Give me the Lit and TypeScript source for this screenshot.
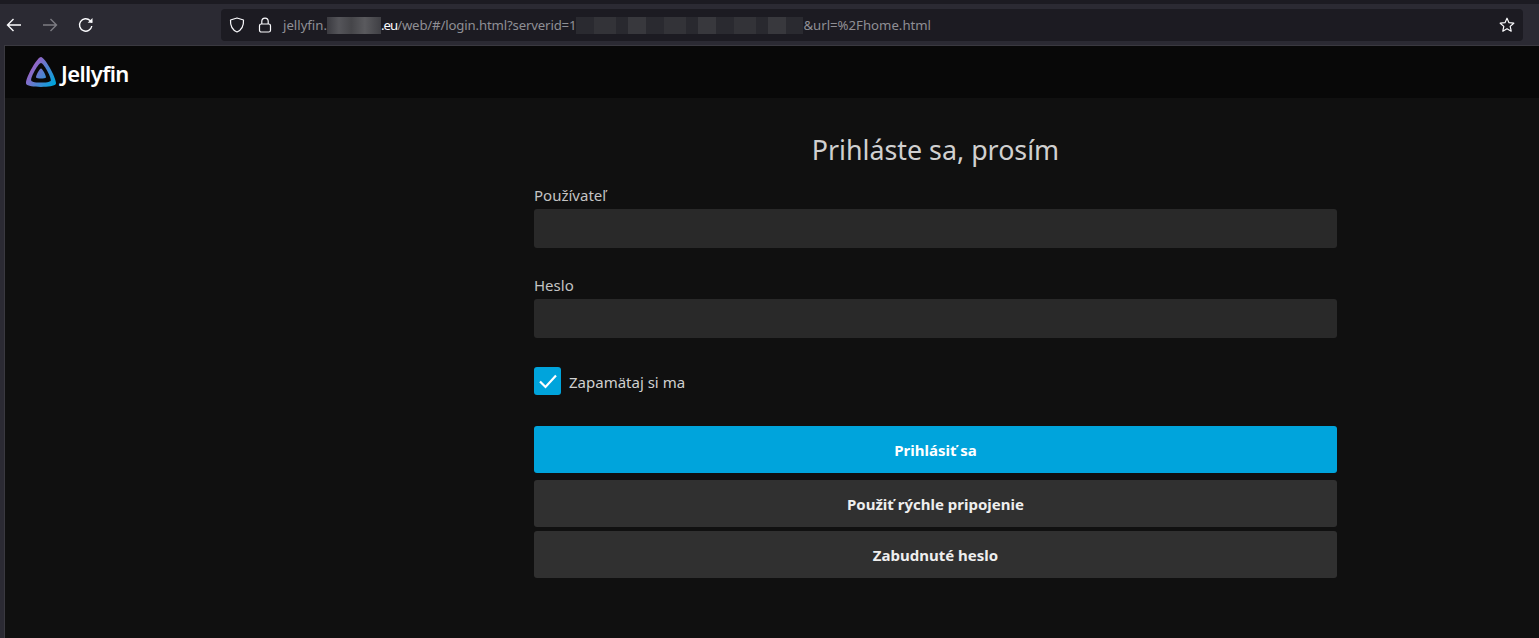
import { LitElement, html, css } from 'lit';
import { customElement } from 'lit/decorators.js';

@customElement('app-root')
export class AppRoot extends LitElement {
  static styles = css`
    :host {
      display: block;
      height: 638px;
      overflow: hidden;
      background: #2b2a33;
      font-family: 'Noto Sans', sans-serif;
    }

    .tabstrip {
      height: 4px;
      background: #1c1b22;
    }

    .toolbar {
      height: 41px;
      display: flex;
      align-items: flex-start;
      box-sizing: border-box;
      padding: 5px 16px 0 0;
    }

    .nav {
      width: 221px;
      height: 32px;
      display: flex;
      align-items: center;
      flex: none;
    }

    .nav svg {
      flex: none;
      fill: none;
      stroke: #fbfbfe;
      stroke-width: 1.4;
    }

    .nav .back {
      margin-left: 6px;
    }

    .nav .forward {
      margin-left: 20px;
      stroke: #7d7c83;
    }

    .nav .reload {
      margin-left: 20px;
    }

    .urlbar {
      flex: 1;
      height: 32px;
      background: #1c1b22;
      border-radius: 4px;
      display: flex;
      align-items: center;
      padding: 0 8px;
      color: #8f8f95;
      font-size: 13.2px;
      white-space: nowrap;
    }

    .urlbar svg {
      flex: none;
      fill: none;
      stroke: #fbfbfe;
      stroke-width: 1.2;
    }

    .urlbar .lock {
      margin: 0 0 0 13px;
    }

    .url {
      margin-left: 11px;
      display: flex;
      align-items: center;
      flex: 1;
    }

    .host {
      color: #fbfbfe;
      letter-spacing: -1px;
    }

    .path {
      letter-spacing: -0.15px;
    }

    .blur {
      display: inline-block;
      height: 17px;
      background: linear-gradient(90deg, #3a3a40, #55555a 22%, #454549 45%, #5a5a5e 70%, #3f3f44);
    }

    .blur.one {
      width: 54px;
    }

    .blur.two {
      width: 227px;
      background: repeating-linear-gradient(
        90deg,
        #2a2a30 0 18px,
        #333338 18px 40px,
        #29292f 40px 52px,
        #38383d 52px 70px
      );
    }

    .window {
      height: 593px;
      margin-left: 4px;
      background: #101010;
      border-top: 1px solid #3a3940;
      border-left: 1px solid #3a3940;
      box-sizing: border-box;
    }

    .header {
      height: 52px;
      background: #080808;
      display: flex;
      align-items: center;
      padding-left: 21px;
      gap: 5px;
    }

    .brand {
      color: #fff;
      font-size: 22px;
      line-height: 30px;
      padding-top: 1px;
      font-weight: 600;
      letter-spacing: -0.6px;
    }

    .form {
      width: 803px;
      margin-left: 529px;
      box-sizing: border-box;
      padding-top: 33px;
      color: #d0d0d0;
    }

    h1 {
      margin: 0 0 16px;
      text-align: center;
      font-size: 26.8px;
      line-height: 38px;
      font-weight: 400;
    }

    .label {
      display: block;
      font-size: 15px;
      line-height: 20px;
      margin-bottom: 4px;
      color: #c4c4c4;
    }

    .input {
      height: 39px;
      background: #292929;
      border-radius: 3px;
      margin-bottom: 27px;
    }

    .remember {
      display: flex;
      align-items: center;
      gap: 8px;
      margin-top: 29px;
      margin-bottom: 31px;
      font-size: 15px;
      color: #d0d0d0;
    }

    .remember span {
      padding-top: 2px;
    }

    .check {
      width: 27px;
      height: 28px;
      background: #00a4dc;
      border-radius: 3px;
      display: flex;
      align-items: center;
      justify-content: center;
    }

    .btn {
      height: 47px;
      display: flex;
      align-items: center;
      justify-content: center;
      background: #303030;
      color: #eeeeee;
      border-radius: 3px;
      font-size: 15px;
      font-weight: 700;
    }

    .btn.primary {
      background: #00a4dc;
      color: #fff;
      margin-bottom: 7px;
    }

    .btn.quick {
      margin-bottom: 4px;
    }
  `;

  render() {
    return html`
      <div class="tabstrip"></div>
      <div class="toolbar">
        <div class="nav">
          <svg class="back" width="16" height="16" viewBox="0 0 16 16"><path d="M15 8H1.500M7.500 2 1.500 8l6 6" /></svg>
          <svg class="forward" width="16" height="16" viewBox="0 0 16 16"><path d="M1 8h13.500M8.500 2l6 6-6 6" /></svg>
          <svg class="reload" width="16" height="16" viewBox="0 0 16 16">
            <path d="M13.800 9a6.200 6.200 0 1 1-1.700-5.400L14 5.400" />
            <path d="M14.500 1v4.800H9.700z" fill="#fbfbfe" stroke="none" />
          </svg>
        </div>
        <div class="urlbar">
          <svg width="16" height="16" viewBox="0 0 16 16"><path d="M8 1 14.500 3c.3 5.500-1.500 9.800-6.500 12C3 12.800 1.200 8.500 1.500 3z" stroke-linejoin="round" /></svg>
          <svg class="lock" width="14" height="16" viewBox="0 0 14 16">
            <rect x="1.500" y="7" width="11" height="8" rx="1.800" />
            <path d="M3.800 7V4.300a3.200 3.200 0 0 1 6.400 0V7" />
          </svg>
          <div class="url">
            <span>jellyfin.</span><span class="blur one"></span><span class="host">.eu</span><span class="path">/web/#/login.html?serverid=1</span><span class="blur two"></span><span>&amp;url=%2Fhome.html</span>
          </div>
          <svg class="star" width="16" height="16" viewBox="0 0 16 16"><path d="M8 1.200 10 5.700l4.800.5-3.600 3.200 1 4.800L8 11.800 3.800 14.200l1-4.800L1.200 6.200 6 5.700z" stroke-linejoin="round" /></svg>
        </div>
      </div>
      <div class="window">
        <div class="header">
          <svg width="30" height="30" viewBox="0 0 24 24">
            <defs>
              <linearGradient id="jf" x1="0.100" y1="0.300" x2="0.950" y2="0.850">
                <stop offset="0" stop-color="#aa5cc3" />
                <stop offset="1" stop-color="#00a4dc" />
              </linearGradient>
            </defs>
            <path
              fill="url(#jf)"
              fill-rule="evenodd"
              d="M12 .002C8.826.002-1.398 18.537.16 21.666c1.560 3.129 22.140 3.094 23.682 0C25.384 18.573 15.177 0 12 0zm7.760 18.949c-1.008 2.028-14.493 2.050-15.514 0C3.224 16.900 9.920 4.755 12.003 4.755c2.081 0 8.770 12.166 7.759 14.196zM12 9.198c-1.054 0-4.446 6.150-3.930 7.189.518 1.040 7.348 1.027 7.860 0 .511-1.027-2.874-7.190-3.930-7.190z"
            />
          </svg>
          <span class="brand">Jellyfin</span>
        </div>
        <div class="form">
          <h1>Prihláste sa, prosím</h1>
          <label class="label">Používateľ</label>
          <div class="input"></div>
          <label class="label">Heslo</label>
          <div class="input"></div>
          <div class="remember">
            <div class="check">
              <svg width="20" height="16" viewBox="0 0 20 16" fill="none" stroke="#fff" stroke-width="2.200">
                <path d="M2 8.500 7.500 14 18 2.500" />
              </svg>
            </div>
            <span>Zapamätaj si ma</span>
          </div>
          <div class="btn primary">Prihlásiť sa</div>
          <div class="btn quick">Použiť rýchle pripojenie</div>
          <div class="btn">Zabudnuté heslo</div>
        </div>
      </div>
    `;
  }
}
